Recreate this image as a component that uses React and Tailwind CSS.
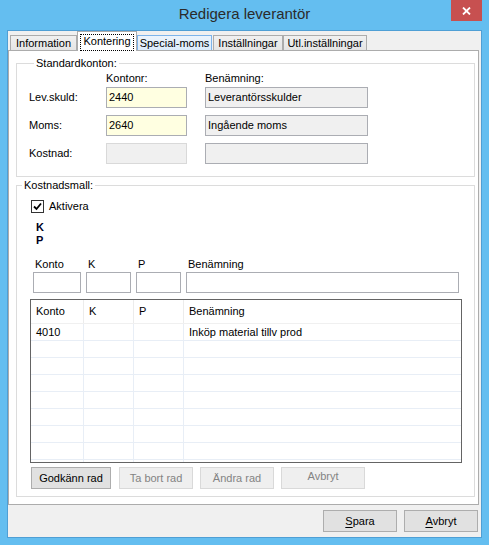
import React from "react";

function Tab({ label, w, ml, state }) {
  if (state === "selected") {
    return (
      <div
        className={`relative z-10 -mb-[1px] h-[20px] ${w} ${ml} border border-b-0 border-[#acacac] bg-white px-[2px] pt-[2px]`}
      >
        <div className="flex h-[17px] items-start justify-center border border-dotted border-[#000] leading-[13px]">
          {label}
        </div>
      </div>
    );
  }
  const cls =
    state === "hover"
      ? "border-[#7eb4ea] bg-gradient-to-b from-[#ecf4fc] to-[#dcecfc]"
      : "border-[#acacac] bg-gradient-to-b from-[#f0f0f0] to-[#e5e5e5]";
  return (
    <div
      className={`flex h-[15px] ${w} ${ml} items-start justify-center border border-b-0 ${cls} pt-[1px] leading-[13px]`}
    >
      {label}
    </div>
  );
}

function Legend({ children }) {
  return <legend className="ml-[5px] px-[2px] leading-[14px]">{children}</legend>;
}

function Field({ w, bg, border, children, ml = "" }) {
  return (
    <div
      className={`flex h-[21px] ${w} ${ml} items-center border ${border} ${bg} pl-[2px] leading-[13px]`}
    >
      {children}
    </div>
  );
}

function StdRow({ label, konto, namn, kontoBg, kontoBorder }) {
  return (
    <div className="flex items-center">
      <div className="w-[77px] leading-[13px]">{label}</div>
      <Field w="w-[81px]" bg={kontoBg} border={kontoBorder}>
        {konto}
      </Field>
      <Field w="w-[163px]" ml="ml-[18px]" bg="bg-[#f0f0f0]" border="border-[#abadb3]">
        {namn}
      </Field>
    </div>
  );
}

function Btn({ children, w, ml = "", disabled = false, extra = "" }) {
  return (
    <div
      className={`flex h-[22px] ${w} ${ml} items-center justify-center border leading-[13px] ${
        disabled
          ? "border-[#d9d9d9] bg-[#efefef] text-[#838383]"
          : "border-[#adadad] bg-[#e1e1e1] text-black"
      } ${extra}`}
    >
      {children}
    </div>
  );
}

const rows = [
  ["4010", "", "", "Inköp material tillv prod"],
  ["", "", "", ""],
  ["", "", "", ""],
  ["", "", "", ""],
  ["", "", "", ""],
  ["", "", "", ""],
  ["", "", "", ""],
  ["", "", "", ""],
  ["", "", "", ""],
];

export default function App() {
  return (
    <div className="relative flex h-[545px] w-[489px] flex-col bg-[#64bef0] font-['Liberation_Sans',Arial,sans-serif] text-[11px] text-black">
      {/* Title bar */}
      <div className="flex h-[30px] items-center justify-center pb-[1px] text-[15px] text-[#2b2b2b]">
        Redigera leverantör
      </div>
      <div className="absolute right-[7px] top-0 flex h-[21px] w-[31px] items-center justify-center bg-[#c75050]">
        <svg width="9" height="8" viewBox="0 0 9 8">
          <path d="M1 0.5 L8 7.5 M8 0.5 L1 7.5" stroke="#fff" strokeWidth="1.8" />
        </svg>
      </div>

      {/* Client area */}
      <div className="ml-[7px] flex h-[508px] w-[475px] flex-col border border-[#4f9fd5] bg-[#f0f0f0]">
        {/* Tab strip */}
        <div className="flex h-[19px] items-end">
          <Tab label="Information" w="w-[67px]" ml="ml-[2px]" />
          <Tab label="Kontering" w="w-[60px]" state="selected" />
          <Tab label="Special-moms" w="w-[75px]" state="hover" />
          <Tab label="Inställningar" w="w-[70px]" ml="ml-[1px]" />
          <Tab label="Utl.inställningar" w="w-[84px]" />
        </div>

        {/* Tab panel */}
        <div className="flex h-[455px] w-[471px] flex-col border border-[#acacac] bg-white">
          {/* Standardkonton */}
          <fieldset className="ml-[7px] mt-[5px] w-[459px] border border-[#dcdcdc] pb-[12px] pl-[12px]">
            <Legend>Standardkonton:</Legend>
            <div className="flex pt-[2px] leading-[13px]">
              <div className="ml-[77px] w-[99px]">Kontonr:</div>
              <div>Benämning:</div>
            </div>
            <div className="mt-[2px] flex flex-col gap-[7px]">
              <StdRow
                label="Lev.skuld:"
                konto="2440"
                namn="Leverantörsskulder"
                kontoBg="bg-[#ffffe1]"
                kontoBorder="border-[#abadb3]"
              />
              <StdRow
                label="Moms:"
                konto="2640"
                namn="Ingående moms"
                kontoBg="bg-[#ffffe1]"
                kontoBorder="border-[#abadb3]"
              />
              <StdRow
                label="Kostnad:"
                konto=""
                namn=""
                kontoBg="bg-[#f0f0f0]"
                kontoBorder="border-[#d9d9d9]"
              />
            </div>
          </fieldset>

          {/* Kostnadsmall */}
          <fieldset className="ml-[7px] mt-[1px] w-[459px] border border-[#dcdcdc] pb-[7px]">
            <Legend>Kostnadsmall:</Legend>
            <div className="ml-[14px] mt-[8px] flex items-center">
              <div className="flex h-[13px] w-[13px] items-center justify-center border border-[#333] bg-white">
                <svg width="9" height="9" viewBox="0 0 9 9">
                  <path d="M1 4.5 L3.5 7 L8 1.5" fill="none" stroke="#000" strokeWidth="1.8" />
                </svg>
              </div>
              <div className="ml-[5px] leading-[13px]">Aktivera</div>
            </div>
            <div className="ml-[19px] mt-[8px] flex flex-col font-bold leading-[13px] text-[#000020]">
              <div>K</div>
              <div>P</div>
            </div>
            <div className="ml-[17px] mt-[11px] flex leading-[13px]">
              <div className="w-[53px] pl-[1px]">Konto</div>
              <div className="w-[50px] pl-[1px]">K</div>
              <div className="w-[50px] pl-[1px]">P</div>
              <div className="pl-[1px]">Benämning</div>
            </div>
            <div className="ml-[16px] mt-[1px] flex gap-[5px]">
              <div className="h-[21px] w-[48px] border border-[#abadb3] bg-white" />
              <div className="h-[21px] w-[45px] border border-[#abadb3] bg-white" />
              <div className="h-[21px] w-[45px] border border-[#abadb3] bg-white" />
              <div className="h-[21px] w-[273px] border border-[#abadb3] bg-white" />
            </div>

            {/* Grid */}
            <div className="ml-[13px] mt-[6px] h-[164px] w-[432px] overflow-hidden border border-[#646464] bg-white">
              <div className="flex h-[24px] items-center border-b border-[#f0f0f0] leading-[13px]">
                <div className="flex h-full w-[53px] items-center border-r border-[#ececec] pl-[5px]">Konto</div>
                <div className="flex h-full w-[50px] items-center border-r border-[#ececec] pl-[5px]">K</div>
                <div className="flex h-full w-[50px] items-center border-r border-[#ececec] pl-[5px]">P</div>
                <div className="flex h-full flex-1 items-center pl-[5px]">Benämning</div>
              </div>
              {rows.map((r, i) => (
                <div key={i} className="flex h-[17px] border-b border-[#e8eef6] leading-[13px]">
                  <div className="flex w-[53px] items-center border-r border-[#e8eef6] pl-[5px]">{r[0]}</div>
                  <div className="flex w-[50px] items-center border-r border-[#e8eef6] pl-[5px]">{r[1]}</div>
                  <div className="flex w-[50px] items-center border-r border-[#e8eef6] pl-[5px]">{r[2]}</div>
                  <div className="flex flex-1 items-center pl-[5px]">{r[3]}</div>
                </div>
              ))}
            </div>

            {/* Row buttons */}
            <div className="ml-[14px] mt-[4px] flex">
              <Btn w="w-[80px]">Godkänn rad</Btn>
              <Btn w="w-[74px]" ml="ml-[8px]" disabled>
                Ta bort rad
              </Btn>
              <Btn w="w-[74px]" ml="ml-[7px]" disabled>
                Ändra rad
              </Btn>
              <Btn w="w-[84px]" ml="ml-[7px]" disabled extra="pb-[3px]">
                Avbryt
              </Btn>
            </div>
          </fieldset>
        </div>

        {/* Bottom buttons */}
        <div className="mr-[3px] mt-[5px] flex justify-end gap-[7px]">
          <Btn w="w-[74px]">
            <span className="underline underline-offset-2">S</span>para
          </Btn>
          <Btn w="w-[74px]">
            <span className="underline underline-offset-2">A</span>vbryt
          </Btn>
        </div>
      </div>
    </div>
  );
}
